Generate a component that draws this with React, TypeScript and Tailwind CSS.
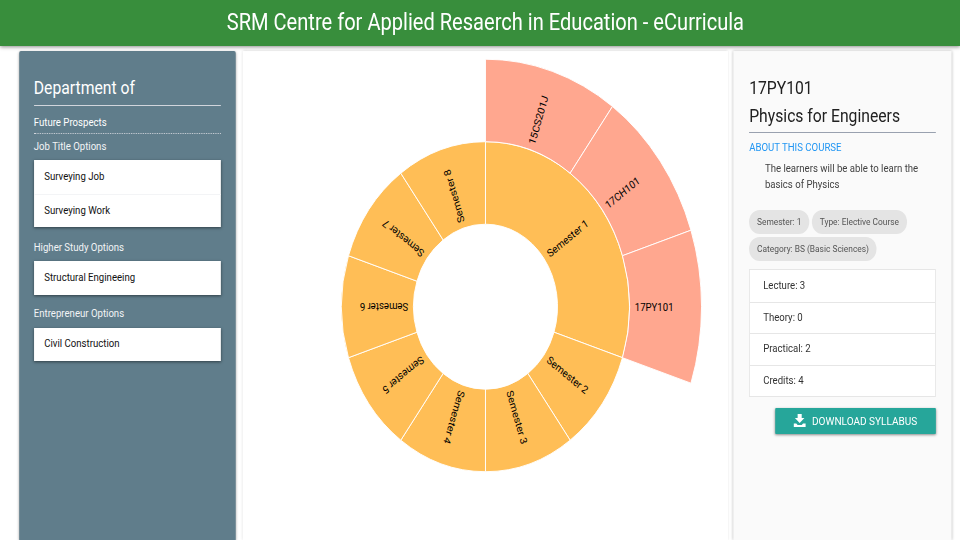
const CX = 278.1
const CY = 255.7

const polar = (r: number, deg: number) => {
  const a = ((deg - 90) * Math.PI) / 180
  return [r * Math.cos(a), r * Math.sin(a)]
}

function arcPath(r0: number, r1: number, a0: number, a1: number) {
  const [x0, y0] = polar(r1, a0)
  const [x1, y1] = polar(r1, a1)
  const [x2, y2] = polar(r0, a1)
  const [x3, y3] = polar(r0, a0)
  return `M${x0} ${y0}A${r1} ${r1} 0 0 1 ${x1} ${y1}L${x2} ${y2}A${r0} ${r0} 0 0 0 ${x3} ${y3}Z`
}

const segments = [
  { label: 'Semester 1', a0: 0, a1: 108, r0: 82.5, r1: 165, fill: '#ffbe56' },
  { label: 'Semester 2', a0: 108, a1: 144, r0: 82.5, r1: 165, fill: '#ffbe56' },
  { label: 'Semester 3', a0: 144, a1: 180, r0: 82.5, r1: 165, fill: '#ffbe56' },
  { label: 'Semester 4', a0: 180, a1: 216, r0: 82.5, r1: 165, fill: '#ffbe56' },
  { label: 'Semester 5', a0: 216, a1: 252, r0: 82.5, r1: 165, fill: '#ffbe56' },
  { label: 'Semester 6', a0: 252, a1: 288, r0: 82.5, r1: 165, fill: '#ffbe56' },
  { label: 'Semester 7', a0: 288, a1: 324, r0: 82.5, r1: 165, fill: '#ffbe56' },
  { label: 'Semester 8', a0: 324, a1: 360, r0: 82.5, r1: 165, fill: '#ffbe56' },
  { label: '15CS201J', a0: 0, a1: 36, r0: 165, r1: 247.5, fill: '#ffa78f' },
  { label: '17CH101', a0: 36, a1: 72, r0: 165, r1: 247.5, fill: '#ffa78f' },
  { label: '17PY101', a0: 72, a1: 108, r0: 165, r1: 247.5, fill: '#ffa78f' },
]

function Sunburst() {
  return (
    <svg width="556.5" height="489" viewBox="0 0 556.5 489" className="block">
      <g transform={`translate(${CX} ${CY})`}>
        {segments.map((s) => (
          <g key={s.label}>
            <path d={arcPath(s.r0, s.r1, s.a0, s.a1)} fill={s.fill} stroke="#fff" strokeWidth="1" />
            <text
              transform={`rotate(${(s.a0 + s.a1) / 2 - 90}) translate(${s.r0 + 6} 0)`}
              dy=".35em"
              fontSize="11"
              fill="#000"
              fontFamily="Roboto, sans-serif"
            >
              {s.label}
            </text>
          </g>
        ))}
      </g>
    </svg>
  )
}

function OptionCard({ items }: { items: string[] }) {
  return (
    <div className="bg-white shadow-[0_1px_3px_rgba(0,0,0,0.5)]">
      {items.map((item, i) => (
        <div key={item} className={`h-[33.5px] pl-[12px] flex items-center text-[11px] text-[#111] ${i > 0 ? 'border-t border-gray-100' : ''}`}>
          {item}
        </div>
      ))}
    </div>
  )
}

export default function App() {
  return (
    <div className="h-[540px] w-[960px] overflow-hidden bg-white">
      {/* the reference is squeezed horizontally, so lay out at 1100 wide */}
      <div className="h-[540px] w-[1100px] origin-top-left scale-x-[0.873] font-['Roboto',sans-serif] flex flex-col">
        <header className="h-[46px] bg-[#388e3c] text-white text-[23px] flex items-center justify-center pl-[12px] shadow-[0_1px_4px_rgba(0,0,0,0.45)] z-10 shrink-0">
          SRM Centre for Applied Resaerch in Education - eCurricula
        </header>

        <main className="flex-1 flex pt-[5px] bg-white">
          {/* Left panel */}
          <aside className="ml-[21.7px] w-[248px] bg-[#607d8b] px-[17px] pt-[25px] rounded-t-[2px] shadow-[0_1px_3px_rgba(0,0,0,0.35)] text-white">
            <h2 className="text-[18px] leading-[24px] pb-[5px] border-b border-gray-300">Department of</h2>
            <div className="text-[11px] leading-[12px] pt-[11px] pb-[4px] border-b border-dotted border-gray-300">Future Prospects</div>
            <div className="text-[11px] leading-[12px] pt-[7px] pb-[7px] text-gray-100">Job Title Options</div>
            <OptionCard items={['Surveying Job', 'Surveying Work']} />
            <div className="text-[11px] leading-[12px] pt-[15px] pb-[7px] text-gray-100">Higher Study Options</div>
            <OptionCard items={['Structural Engineeing']} />
            <div className="text-[11px] leading-[12px] pt-[13px] pb-[8px] text-gray-100">Entrepreneur Options</div>
            <OptionCard items={['Civil Construction']} />
          </aside>

          {/* Chart */}
          <section className="ml-[8px] w-[556.5px] bg-white shadow-[0_0_3px_rgba(0,0,0,0.2)]">
            <Sunburst />
          </section>

          {/* Course details */}
          <aside className="ml-[6px] w-[250px] bg-[#fafafa] px-[18px] pt-[25px] shadow-[0_0_3px_rgba(0,0,0,0.25)]">
            <div className="text-[18px] leading-[24px] text-[#212121]">17PY101</div>
            <div className="text-[18px] leading-[24px] mt-[4px] pb-[4px] border-b border-gray-400 text-[#212121]">Physics for Engineers</div>
            <div className="text-[11px] leading-[12px] mt-[9px] text-[#2196f3]">ABOUT THIS COURSE</div>
            <p className="text-[11px] leading-[16px] mt-[7px] pl-[18px] text-[#424242]">The learners will be able to learn the basics of Physics</p>
            <div className="flex flex-wrap gap-x-[3px] gap-y-[3px] mt-[17px]">
              <span className="h-[24px] px-[9px] rounded-full bg-[#e4e4e4] text-[#555] text-[9.6px] flex items-center">Semester: 1</span>
              <span className="h-[24px] px-[9px] rounded-full bg-[#e4e4e4] text-[#555] text-[9.6px] flex items-center">Type: Elective Course</span>
              <span className="h-[24px] px-[9px] rounded-full bg-[#e4e4e4] text-[#555] text-[9.6px] flex items-center">Category: BS (Basic Sciences)</span>
            </div>
            <div className="mt-[8px] bg-white border border-[#e6e6e6]">
              {['Lecture: 3', 'Theory: 0', 'Practical: 2', 'Credits: 4'].map((row, i) => (
                <div key={row} className={`h-[31.5px] pl-[15px] flex items-center text-[11px] text-[#333] ${i > 0 ? 'border-t border-[#e6e6e6]' : ''}`}>
                  {row}
                </div>
              ))}
            </div>
            <div className="flex justify-end mt-[11px]">
              <button className="w-[184.5px] h-[26px] pt-[2px] bg-[#26a69a] text-white text-[11.5px] flex items-center justify-center gap-[7px] rounded-[1px] shadow-[0_1px_3px_rgba(0,0,0,0.45)]">
                <svg width="14" height="13" viewBox="3 3 18 19" preserveAspectRatio="none" fill="#fff" className="-mt-[4px]">
                  <path d="M19 9h-4V3H9v6H5l7 7 7-7zM3 17h4l2 2h6l2-2h4v5H3z" />
                </svg>
                DOWNLOAD SYLLABUS
              </button>
            </div>
          </aside>
        </main>
      </div>
    </div>
  )
}
